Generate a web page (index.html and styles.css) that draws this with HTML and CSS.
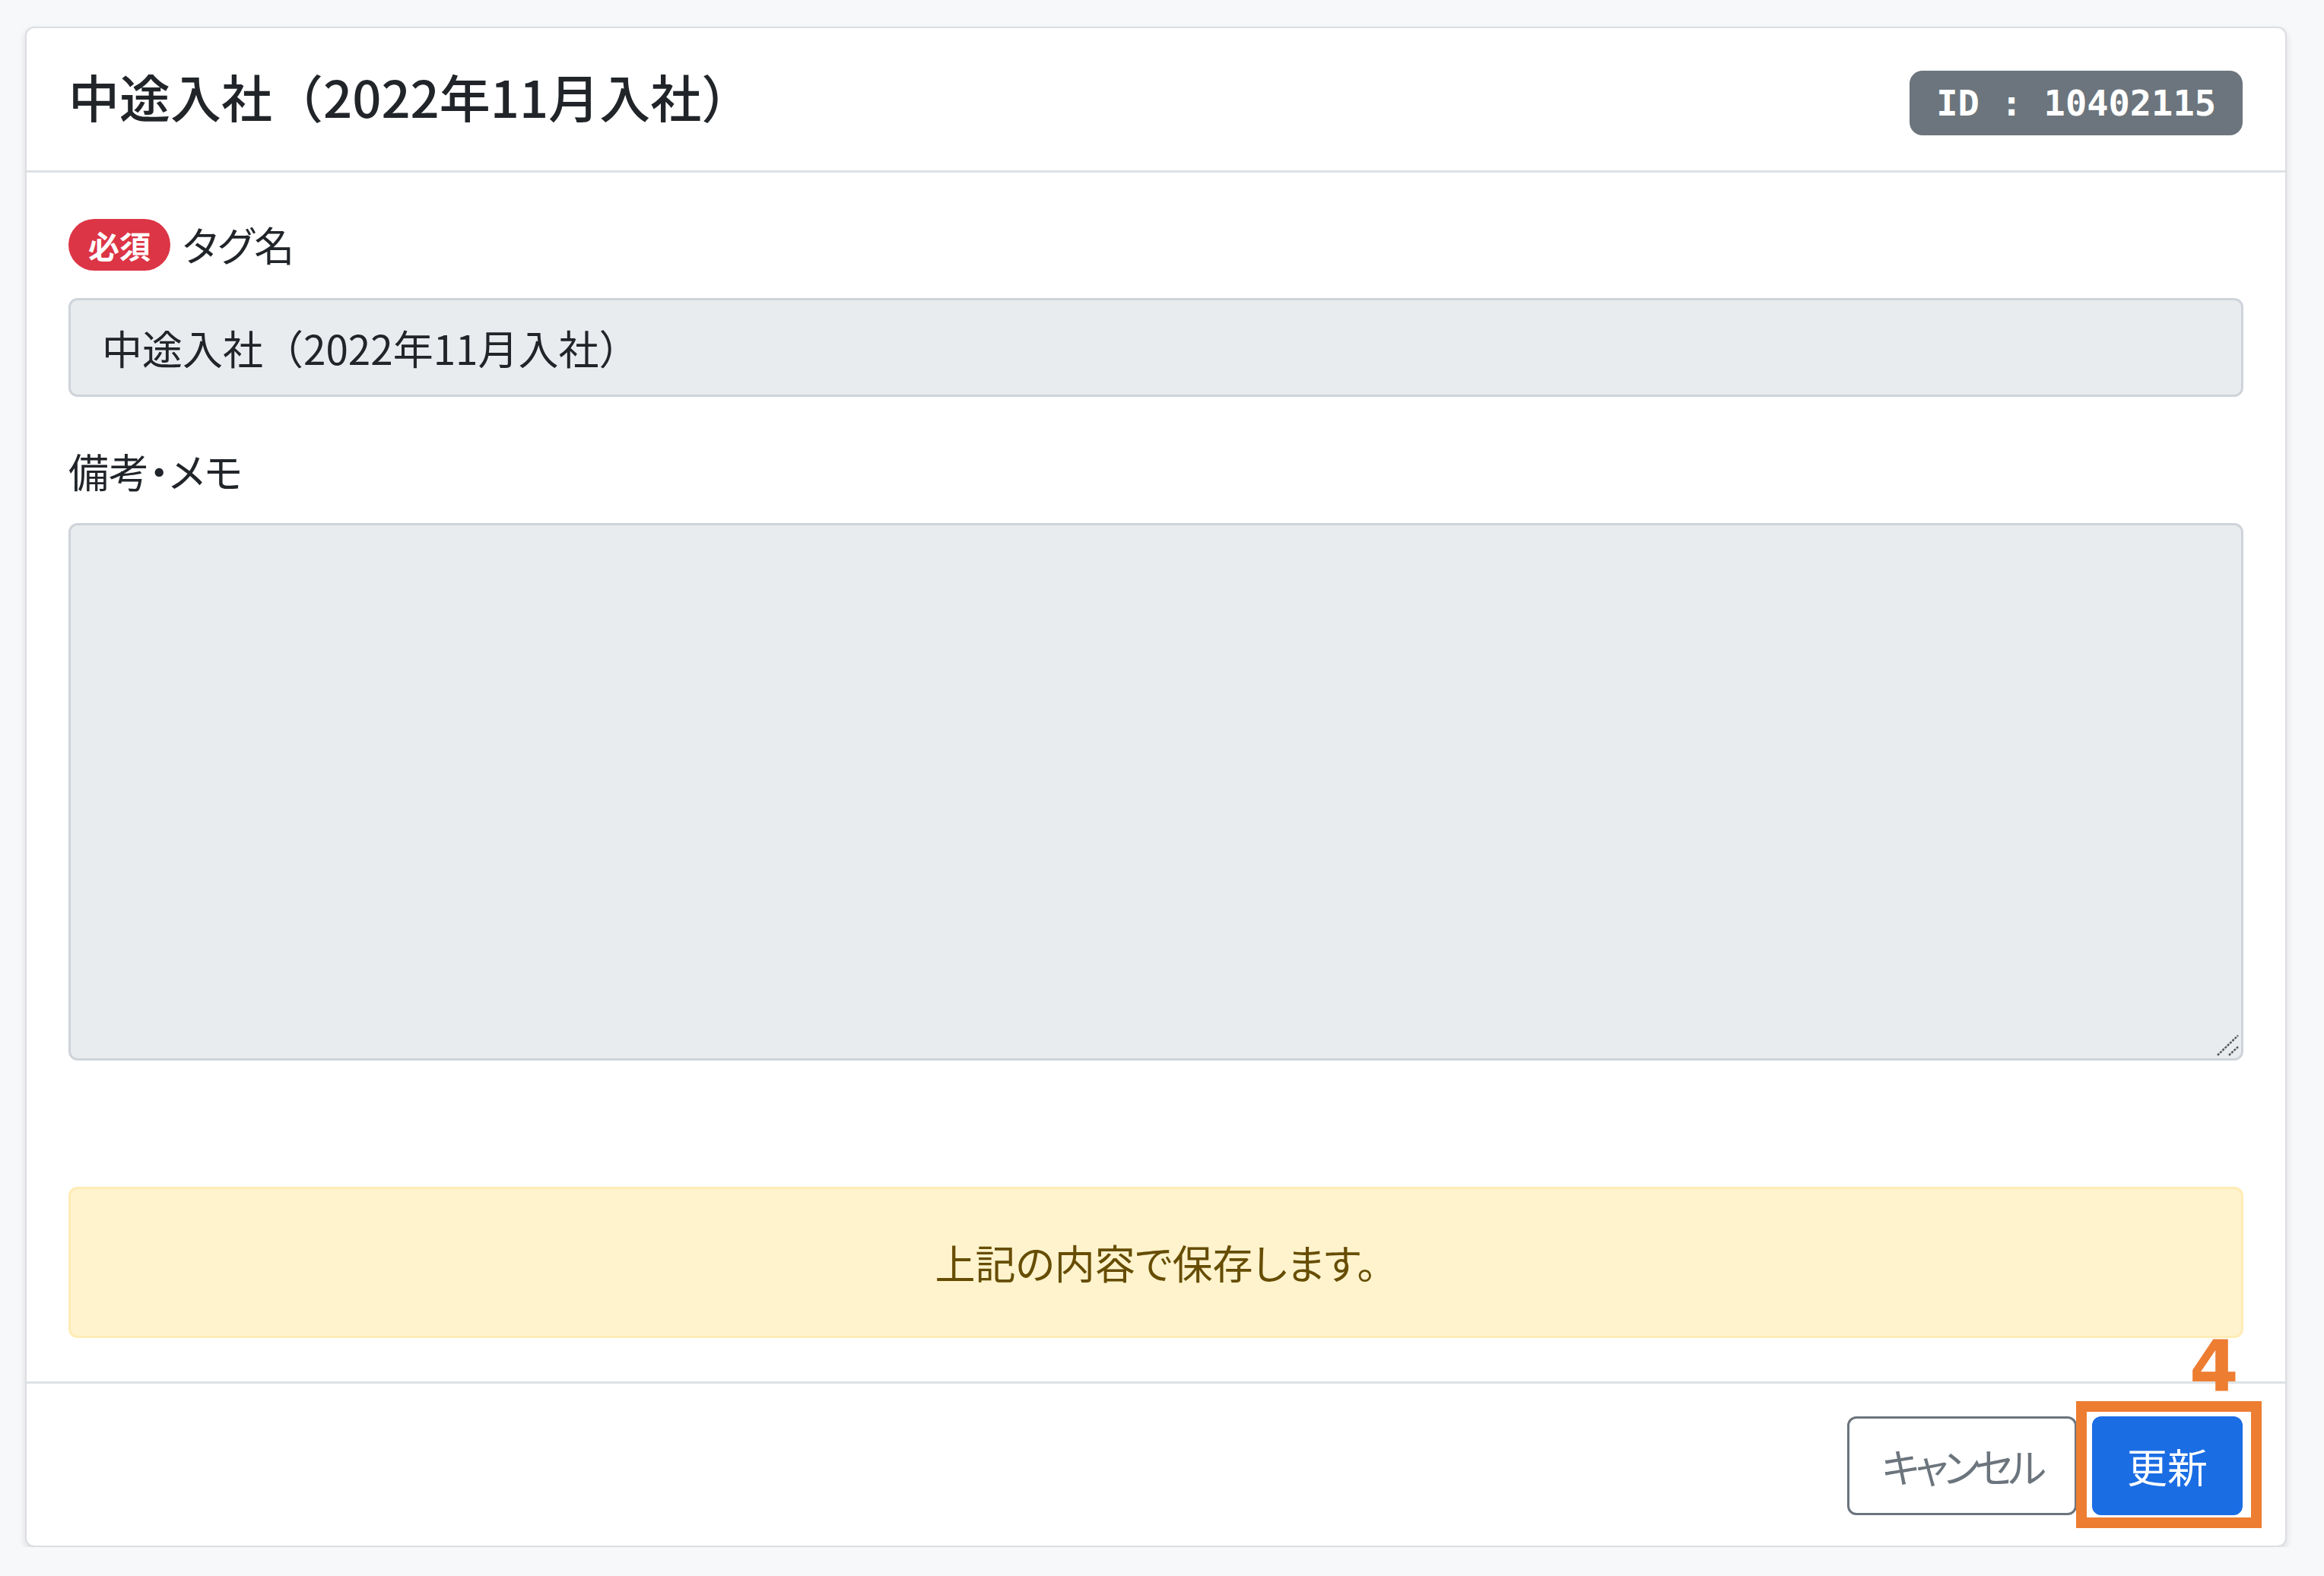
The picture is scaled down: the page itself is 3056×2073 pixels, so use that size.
FILE: index.html
```html
<!DOCTYPE html>
<html lang="ja">

<head>
  <meta charset="utf-8">
  <title>タグ編集</title>
  <link rel="stylesheet" href="styles.css">
</head>

<body>

  <div class="page">
    <div class="modal-card">

      <div class="modal-header">
        <h5 class="modal-title">中途入社（2022年11月入社）</h5>
        <span class="id-badge">ID : 10402115</span>
      </div>

      <div class="modal-body">
        <div class="field field-tag">
          <label class="field-label" for="tagName"><span class="req-badge">必須</span>タグ名</label>
          <input class="form-control" id="tagName" type="text" value="中途入社（2022年11月入社）" readonly>
        </div>

        <div class="field field-memo">
          <label class="field-label" for="memo">備考・メモ</label>
          <div class="textarea-wrap">
            <textarea class="form-control memo" id="memo" readonly></textarea>
            <svg class="grip" width="30" height="30" viewBox="0 0 30 30">
              <line x1="1" y1="28" x2="28" y2="2" />
              <line x1="16" y1="28" x2="28" y2="17" />
            </svg>
          </div>
        </div>

        <div class="alert-warning">上記の内容で保存します。</div>
      </div>

      <div class="modal-footer">
        <button class="btn btn-outline" type="button">キャンセル</button>
        <span class="mark-wrap">
          <button class="btn btn-primary" type="button">更新</button>
          <span class="mark-box"></span>
          <span class="mark-num">4</span>
        </span>
      </div>

    </div>
  </div>

</body>

</html>
```

FILE: styles.css
```css
body {
  margin: 0;
  padding: 0;
  background: #f7f8fa;
  font-family: "Noto Sans CJK JP", sans-serif;
  color: #212529;
}

.page {
  padding: 35px 0 0 33px;
}

.modal-card {
  width: 2974px;
  box-sizing: border-box;
  background-color: #fff;
  border: 2px solid #dcdee1;
  border-radius: 12px;
  box-shadow: 0 4px 10px rgba(0, 0, 0, 0.12);
}

.modal-header {
  display: flex;
  align-items: flex-start;
  justify-content: space-between;
  padding: 48px 56px 46px 55px;
  border-bottom: 3px solid #dee2e6;
}

.modal-title {
  margin: 0;
  font-size: 67px;
  line-height: 82px;
  font-weight: 500;
}

.id-badge {
  margin-top: 8px;
  padding: 19px 35px;
  background-color: #6c757d;
  color: #fff;
  border-radius: 17px;
  font-family: "DejaVu Sans Mono", monospace;
  font-weight: bold;
  font-size: 47px;
  line-height: 1;
}

.modal-body {
  padding: 54px 55px 57px 55px;
}

.field-label {
  display: flex;
  align-items: center;
  gap: 16px;
  font-size: 53px;
  line-height: 81px;
  font-feature-settings: "palt";
}

.field-tag .field-label {
  margin-bottom: 30px;
}

.field-tag {
  margin-bottom: 57px;
}

.field-memo .field-label {
  margin-bottom: 28px;
}

.field-memo {
  margin-bottom: 166px;
}

.req-badge {
  display: inline-block;
  padding: 0 26px;
  height: 68px;
  line-height: 68px;
  background-color: #dc3545;
  color: #fff;
  border-radius: 34px;
  font-size: 41px;
  font-weight: bold;
}

.form-control {
  display: block;
  width: 100%;
  box-sizing: border-box;
  margin: 0;
  padding: 21px 41px;
  background-color: #e9ecef;
  border: 3px solid #ced4da;
  border-radius: 12px;
  font-family: "Noto Sans CJK JP", sans-serif;
  font-size: 53px;
  line-height: 82px;
  color: #212529;
  outline: none;
}

.textarea-wrap {
  position: relative;
}

.memo {
  height: 707px;
  resize: none;
}

.grip {
  position: absolute;
  right: 5px;
  bottom: 5px;
  stroke: #555;
  stroke-width: 2.5;
  stroke-dasharray: 3 1.5;
}

.alert-warning {
  padding: 56px;
  background-color: #fff3cd;
  border: 3px solid #ffecb5;
  border-radius: 12px;
  color: #664d03;
  text-align: center;
  font-size: 53px;
  line-height: 81px;
  font-feature-settings: "palt";
}

.modal-footer {
  display: flex;
  justify-content: flex-end;
  align-items: center;
  gap: 20px;
  padding: 43px 56px 40px 55px;
  border-top: 3px solid #dee2e6;
}

.btn {
  padding: 21px 43px;
  border-radius: 12px;
  font-family: "Noto Sans CJK JP", sans-serif;
  font-size: 53px;
  line-height: 82px;
  cursor: pointer;
  font-feature-settings: "palt";
}

.btn-outline {
  background-color: #fff;
  border: 3px solid #6c757d;
  color: #6c757d;
  letter-spacing: -6px;
}

.btn-primary {
  display: block;
  background-color: #1b6de4;
  border: 3px solid #1b6de4;
  color: #fff;
}

.mark-wrap {
  position: relative;
  display: block;
}

.mark-box {
  position: absolute;
  left: -21px;
  right: -25px;
  top: -20px;
  bottom: -17px;
  border: 14px solid #ed7d31;
}

.mark-num {
  position: absolute;
  left: 128px;
  top: -112px;
  font-family: "DejaVu Sans", sans-serif;
  font-weight: bold;
  font-size: 93px;
  line-height: 1;
  color: #ed7d31;
}
```
